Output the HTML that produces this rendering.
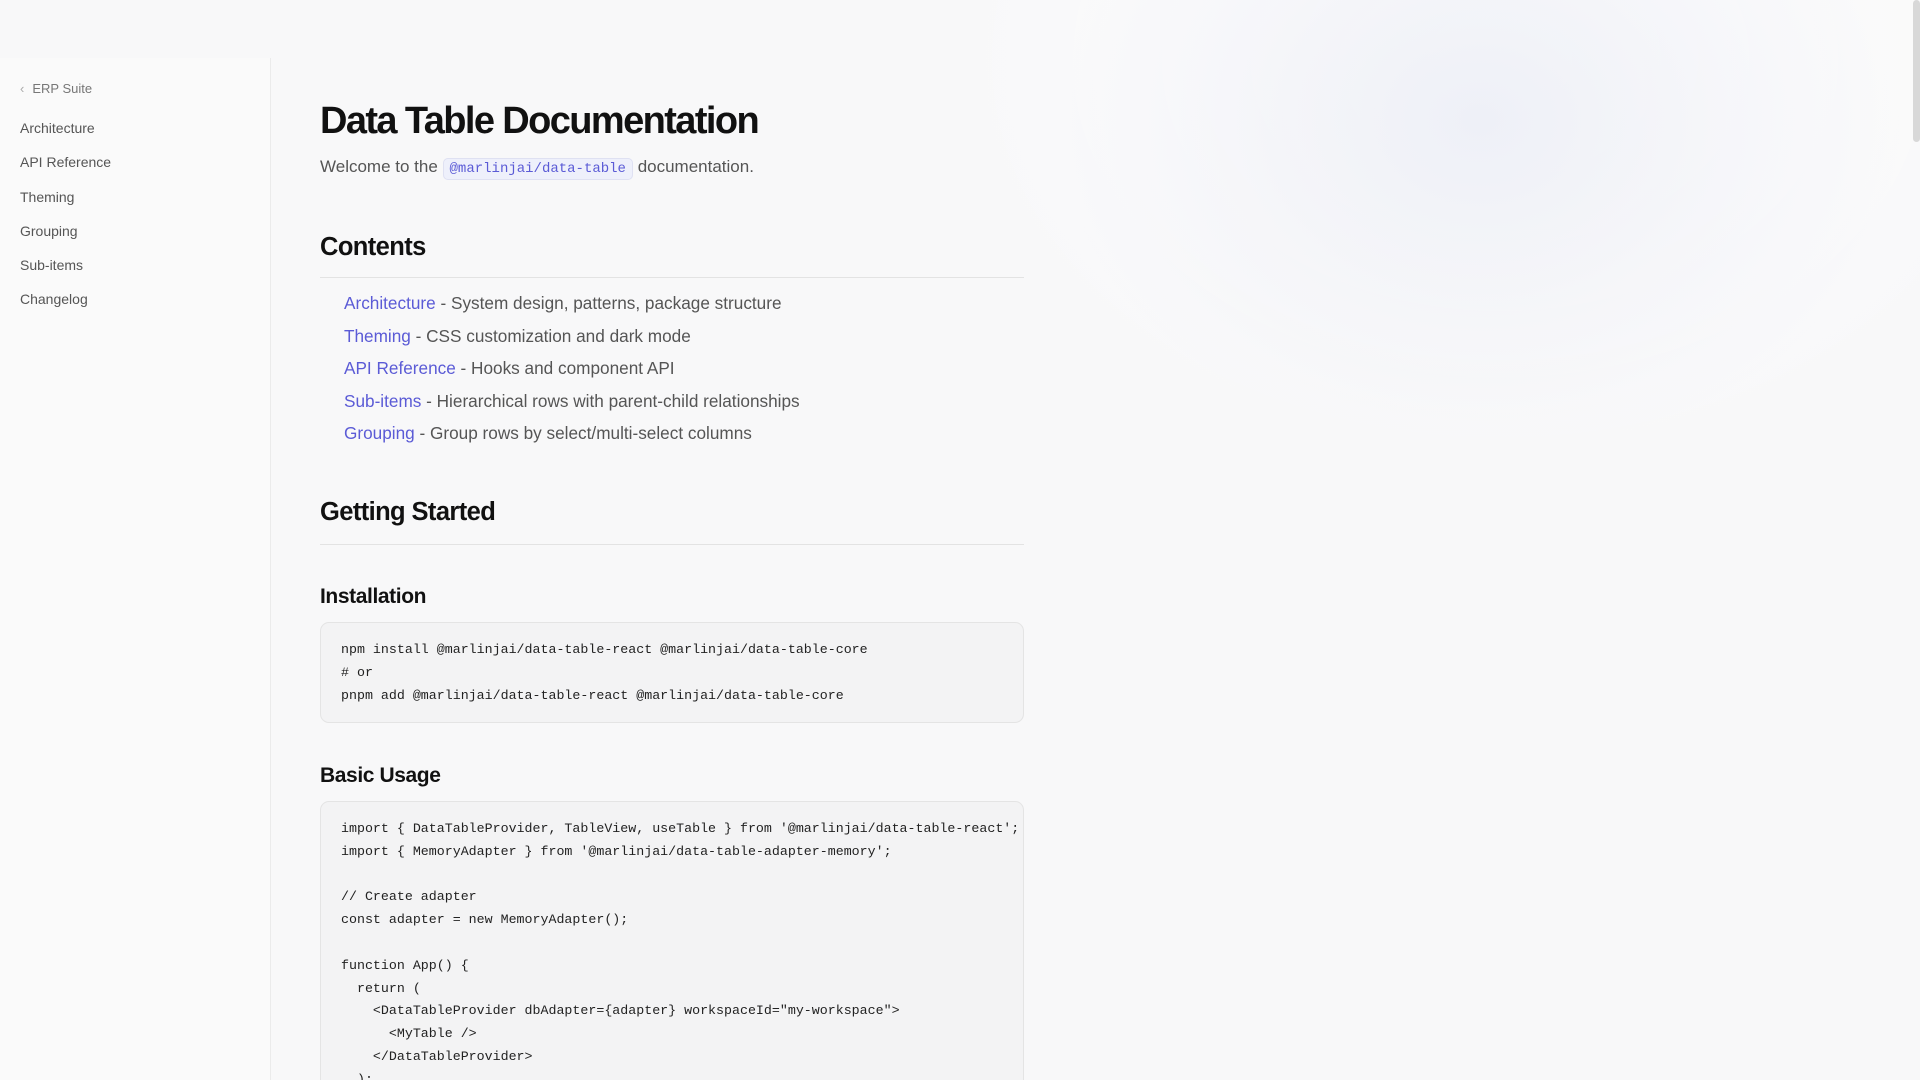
<!DOCTYPE html>
<html><head><meta charset="utf-8"><style>
*{margin:0;padding:0;box-sizing:border-box}
html,body{width:1920px;height:1080px;overflow:hidden}
body{font-family:"Liberation Sans",sans-serif;background:#f8f8f9;position:relative;color:#222}
.bg{position:absolute;inset:0;background:
radial-gradient(ellipse 420px 340px at 1480px 120px,#eef0f7 0%,rgba(240,241,247,0.6) 50%,rgba(248,248,249,0) 100%),
radial-gradient(ellipse 700px 520px at 1500px 60px,rgba(255,255,255,0.9) 0%,rgba(248,248,249,0) 80%);}
.side{position:absolute;left:0;top:58px;width:271px;height:1022px;border-right:1px solid #ebebeb;background:#fafafa}
.back{position:absolute;left:20px;top:80px;font-size:13px;color:#777}
.back span{margin-right:8px;color:#aaa}
.nav a{position:absolute;left:20px;font-size:14px;color:#555;text-decoration:none}
.main{position:absolute;left:320px;top:0;width:704px}
h1{position:absolute;top:100px;font-size:38px;font-weight:bold;letter-spacing:-1.6px;color:#111;white-space:nowrap}
.sub{position:absolute;top:157px;font-size:17px;color:#555;white-space:nowrap}
code.i{font-family:"Liberation Mono",monospace;font-size:14px;color:#5b5bd6;background:#eef0fb;border:1px solid #dfe1f2;border-radius:5px;padding:2px 6px}
h2{position:absolute;font-size:25.5px;font-weight:bold;letter-spacing:-0.6px;color:#111}
h3{position:absolute;font-size:21px;font-weight:bold;letter-spacing:-0.4px;color:#111}
.hr{position:absolute;left:0;width:704px;height:1px;background:#e3e3e3}
.li{position:absolute;left:24px;font-size:17.2px;color:#555;white-space:nowrap}
.li a{color:#5b5bd6;text-decoration:none}
.code{position:absolute;left:0;width:704px;background:#f3f3f4;border:1px solid #e4e4e4;border-radius:9px;padding:16px 20px;font-family:"Liberation Mono",monospace;font-size:13.3px;line-height:22.8px;color:#222;white-space:pre;overflow:hidden}
.sb{position:absolute;right:0;top:0;width:7px;height:142px;background:#d8d8d8;border-radius:4px}
</style></head><body>
<div class="bg"></div>
<div class="side">
<div class="back" style="top:23px"><span>‹</span>ERP Suite</div>
<div class="nav">
<a style="top:62px">Architecture</a>
<a style="top:96px">API Reference</a>
<a style="top:131px">Theming</a>
<a style="top:165px">Grouping</a>
<a style="top:199px">Sub-items</a>
<a style="top:233px">Changelog</a>
</div></div>
<div class="main">
<h1>Data Table Documentation</h1>
<div class="sub">Welcome to the <code class="i">@marlinjai/data-table</code> documentation.</div>
<h2 style="top:233px">Contents</h2>
<div class="hr" style="top:277px"></div>
<div class="li" style="top:293px"><a>Architecture</a> - System design, patterns, package structure</div>
<div class="li" style="top:326px"><a>Theming</a> - CSS customization and dark mode</div>
<div class="li" style="top:358px"><a>API Reference</a> - Hooks and component API</div>
<div class="li" style="top:391px"><a>Sub-items</a> - Hierarchical rows with parent-child relationships</div>
<div class="li" style="top:423px"><a>Grouping</a> - Group rows by select/multi-select columns</div>
<h2 style="top:498px">Getting Started</h2>
<div class="hr" style="top:544px"></div>
<h3 style="top:585px">Installation</h3>
<div class="code" style="top:622px;height:101px">npm install @marlinjai/data-table-react @marlinjai/data-table-core
# or
pnpm add @marlinjai/data-table-react @marlinjai/data-table-core</div>
<h3 style="top:764px">Basic Usage</h3>
<div class="code" style="top:801px;height:300px">import { DataTableProvider, TableView, useTable } from '@marlinjai/data-table-react';
import { MemoryAdapter } from '@marlinjai/data-table-adapter-memory';

// Create adapter
const adapter = new MemoryAdapter();

function App() {
  return (
    &lt;DataTableProvider dbAdapter={adapter} workspaceId="my-workspace"&gt;
      &lt;MyTable /&gt;
    &lt;/DataTableProvider&gt;
  );</div>
</div>
<div class="sb"></div>
</body></html>
